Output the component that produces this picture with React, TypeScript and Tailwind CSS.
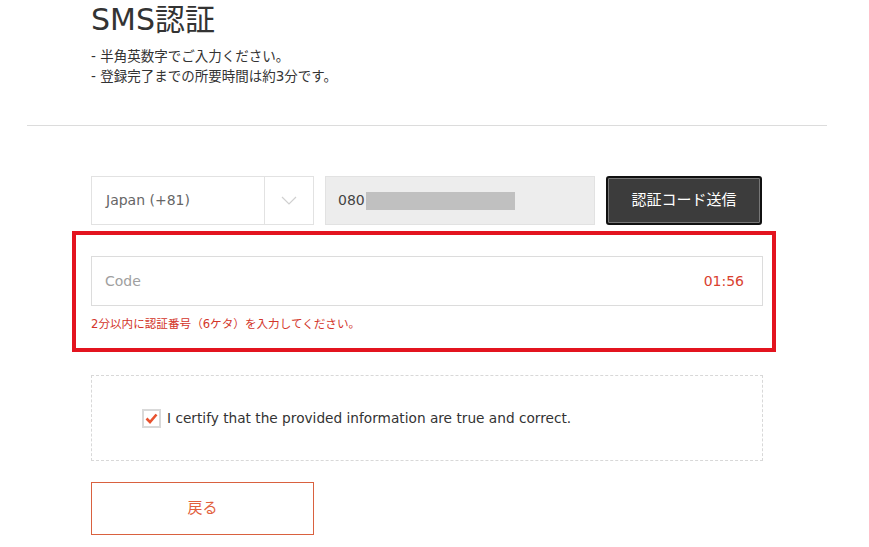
import React from 'react'

const font = { fontFamily: '"DejaVu Sans", "Noto Sans CJK JP", sans-serif' }

export default function App() {
  return (
    <div className="w-[869px] h-[547px] bg-white overflow-hidden text-[#333]" style={font}>
      <div className="ml-[27px] w-[800px]">
        {/* header */}
        <div className="px-[64px] pt-[1px]">
          <h1 className="text-[30px] leading-[38px] font-normal text-[#333]">SMS認証</h1>
          <ul className="mt-[7px] text-[13.5px] leading-[20px] text-[#333]">
            <li>- 半角英数字でご入力ください。</li>
            <li>- 登録完了までの所要時間は約3分です。</li>
          </ul>
        </div>

        <div className="mt-[39px] h-px bg-[#dcdcdc]" />

        <div className="px-[64px] pt-[50px]">
          {/* phone row */}
          <div className="flex items-stretch h-[49px]">
            <div className="w-[223px] flex border border-[#e2e2e2] bg-white">
              <div className="flex-1 flex items-center pl-[14px] text-[14px] text-[#666]">Japan (+81)</div>
              <div className="w-[49px] border-l border-[#e2e2e2] flex items-center justify-center">
                <svg width="16" height="9" viewBox="0 0 16 9" fill="none">
                  <path d="M1 1l7 7 7-7" stroke="#d0d0d0" strokeWidth="1.2" />
                </svg>
              </div>
            </div>
            <div className="ml-[11px] w-[270px] flex items-center pl-[12px] bg-[#ededed] border border-[#e2e2e2] text-[14px] text-[#444]">
              080
              <span className="ml-[1px] w-[149px] h-[18px] bg-[#c0c0c0]" />
            </div>
            <button className="ml-[11px] w-[156px] rounded-[3px] border-2 border-[#111] bg-[#3c3c3c] text-white text-[15px] shadow-[inset_0_0_0_1px_#777]">
              認証コード送信
            </button>
          </div>

          {/* code (highlighted) */}
          <div className="-ml-[19px] -mr-[13px] mt-[6px] border-4 border-[#e3141f] pl-[15px] pr-[9px] pt-[21px] pb-[15px]">
            <div className="h-[50px] flex items-center justify-between border border-[#dcdcdc] px-[13px]">
              <span className="text-[14px] text-[#a0a0a0]">Code</span>
              <span className="text-[14px] text-[#d9412f] pr-[5px]">01:56</span>
            </div>
            <p className="mt-[9px] text-[11.6px] leading-[18px] text-[#d3352a]">2分以内に認証番号（6ケタ）を入力してください。</p>
          </div>

          {/* certify */}
          <div className="mt-[23px] h-[86px] border border-dashed border-[#d8d8d8] flex items-center pl-[50px]">
            <span className="w-[19px] h-[19px] border-2 border-[#d9d9d9] bg-white flex items-center justify-center">
              <svg width="13" height="11" viewBox="0 0 13 11" fill="none">
                <path d="M1.5 5.5l3.5 3.5 6.5-7.5" stroke="#e8522f" strokeWidth="2.6" />
              </svg>
            </span>
            <span className="ml-[6px] text-[13.7px] text-[#333]">I certify that the provided information are true and correct.</span>
          </div>

          {/* back */}
          <div className="mt-[21px] w-[223px] h-[53px] flex items-center justify-center border border-solid border-[#d9613f] text-[15px] text-[#e2603d] bg-white">
            戻る
          </div>
        </div>
      </div>
    </div>
  )
}
